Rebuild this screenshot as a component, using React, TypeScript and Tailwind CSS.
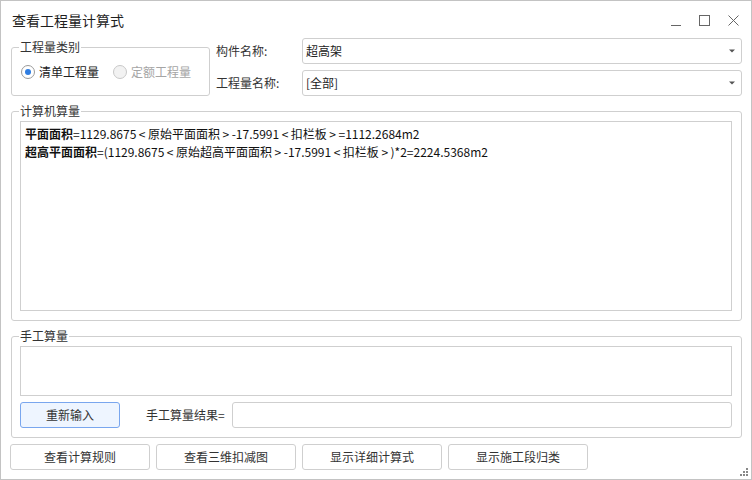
import React from "react";

const font = { fontFamily: '"Noto Sans CJK SC", "Noto Sans", sans-serif' };

function Group({ label, className, children }: { label: string; className?: string; children?: React.ReactNode }) {
  return (
    <div className={"relative border border-[#cfcfcf] rounded-[3px] " + (className ?? "")}>
      <span className="absolute left-[7px] top-[-8px] bg-white px-[1px] text-[12px] leading-[14px] text-[#333]">{label}</span>
      {children}
    </div>
  );
}

function Combo({ value }: { value: string }) {
  return (
    <div className="flex-1 h-[26px] border border-[#cfcfcf] rounded-[3px] flex items-center justify-between pl-[3px] pr-[6px] text-[12px] text-[#222]">
      <span>{value}</span>
      <svg width="6" height="4" viewBox="0 0 6 4"><path d="M0 0.5h6L3 3.5z" fill="#555" /></svg>
    </div>
  );
}

function Btn({ children }: { children: React.ReactNode }) {
  return (
    <div className="w-[140px] h-[26px] border border-[#cfcfcf] rounded-[3px] bg-white flex items-center justify-center text-[12px] text-[#333]">
      {children}
    </div>
  );
}

function L() {
  return <span className="px-[2.5px]">&lt;</span>;
}
function R() {
  return <span className="px-[2.5px]">&gt;</span>;
}

export default function App() {
  return (
    <div style={font} className="w-[752px] h-[480px] border border-[#c3c3c3] bg-white flex flex-col overflow-hidden relative">
      {/* title bar */}
      <div className="h-[37px] flex items-center justify-between pl-[11px] pr-[12px]">
        <span className="text-[14px] text-[#1f1f1f] mt-[2px]">查看工程量计算式</span>
        <div className="flex items-center gap-[18px] mt-[2px]">
          <svg width="10" height="10" viewBox="0 0 10 10"><path d="M0 9.5h10" stroke="#666" strokeWidth="1" /></svg>
          <svg width="11" height="11" viewBox="0 0 11 11"><rect x="0.5" y="0.5" width="10" height="10" fill="none" stroke="#666" strokeWidth="1" /></svg>
          <svg width="11" height="11" viewBox="0 0 11 11"><path d="M0.5 0.5l10 10M10.5 0.5l-10 10" stroke="#666" strokeWidth="1" /></svg>
        </div>
      </div>

      {/* top section */}
      <div className="flex ml-[10px] mr-[9px]">
        <Group label="工程量类别" className="w-[199px] h-[49px] mt-[9px] flex items-center pl-[9px]">
          <div className="flex items-center mt-[1px]">
            <div className="w-[14px] h-[14px] rounded-full border border-[#9a9a9a] bg-white flex items-center justify-center">
              <div className="w-[6px] h-[6px] rounded-full bg-[#2f7de1]" />
            </div>
            <span className="ml-[4px] text-[12px] text-[#222]">清单工程量</span>
            <div className="ml-[14px] w-[14px] h-[14px] rounded-full border border-[#c8c8c8] bg-[#f2f2f2]" />
            <span className="ml-[4px] text-[12px] text-[#a5a5a5]">定额工程量</span>
          </div>
        </Group>
        <div className="flex-1 flex flex-col gap-[6px] ml-[6px]">
          <div className="flex items-center">
            <span className="w-[86px] text-[12px] text-[#333]">构件名称:</span>
            <Combo value="超高架" />
          </div>
          <div className="flex items-center">
            <span className="w-[86px] text-[12px] text-[#333]">工程量名称:</span>
            <Combo value="[全部]" />
          </div>
        </div>
      </div>

      {/* computer calc */}
      <Group label="计算机算量" className="ml-[10px] mr-[9px] mt-[15px] h-[210px] pt-[9px] pl-[8px] pr-[9px]">
        <div className="h-[190px] border border-[#cfcfcf] pl-[4px] pt-[3px] text-[12px] leading-[18px] text-[#111]">
          <div>
            <b>平面面积</b>=1129.8675<L />原始平面面积<R />-17.5991<L />扣栏板<R />=1112.2684m2
          </div>
          <div>
            <b>超高平面面积</b>=(1129.8675<L />原始超高平面面积<R />-17.5991<L />扣栏板<R />)*2=2224.5368m2
          </div>
        </div>
      </Group>

      {/* manual calc */}
      <Group label="手工算量" className="ml-[10px] mr-[9px] mt-[15px] h-[102px] pt-[9px] pl-[8px] pr-[9px]">
        <div className="h-[50px] border border-[#cfcfcf]" />
        <div className="flex items-center mt-[6px] h-[26px]">
          <div className="w-[100px] h-[26px] border border-[#79a6ee] rounded-[3px] bg-[#eef5ff] flex items-center justify-center text-[12px] text-[#333]">重新输入</div>
          <span className="ml-[26px] w-[86px] text-[12px] text-[#333]">手工算量结果=</span>
          <div className="flex-1 h-[26px] border border-[#cfcfcf] rounded-[3px]" />
        </div>
      </Group>

      {/* bottom buttons */}
      <div className="flex gap-[6px] ml-[9px] mt-[6px]">
        <Btn>查看计算规则</Btn>
        <Btn>查看三维扣减图</Btn>
        <Btn>显示详细计算式</Btn>
        <Btn>显示施工段归类</Btn>
      </div>

      {/* resize grip */}
      <svg className="absolute right-[2px] bottom-[2px]" width="10" height="10" viewBox="0 0 10 10">
        <rect x="7" y="1" width="2" height="2" fill="#888" />
        <rect x="4" y="4" width="2" height="2" fill="#888" />
        <rect x="7" y="4" width="2" height="2" fill="#888" />
        <rect x="1" y="7" width="2" height="2" fill="#888" />
        <rect x="4" y="7" width="2" height="2" fill="#888" />
        <rect x="7" y="7" width="2" height="2" fill="#888" />
      </svg>
    </div>
  );
}
